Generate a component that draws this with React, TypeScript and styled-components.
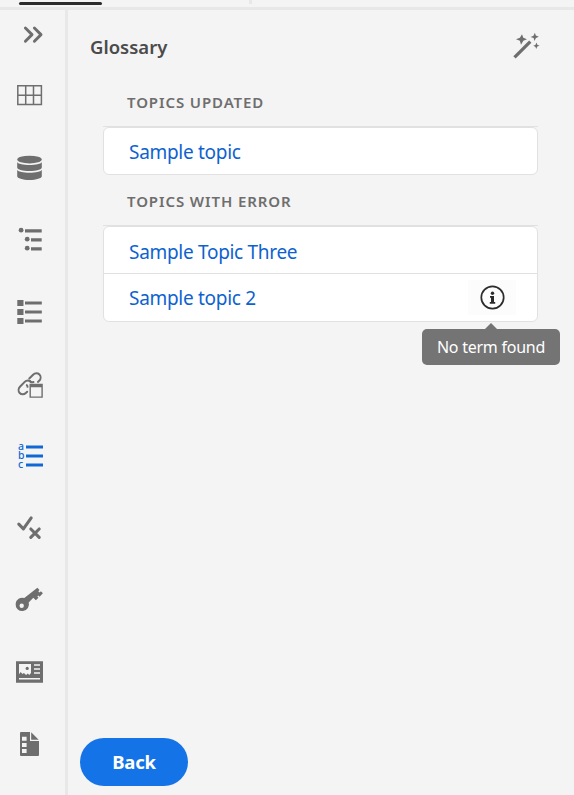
import React from "react";
import styled, { createGlobalStyle } from "styled-components";

const GlobalStyle = createGlobalStyle`
  * { box-sizing: border-box; }
  body { margin: 0; background: #f4f4f4; font-family: "Noto Sans", "Open Sans", sans-serif; }
`;

const Shell = styled.div`
  display: flex;
  flex-direction: column;
  width: 574px;
  height: 795px;
  overflow: hidden;
  background: #f4f4f4;
`;

const TabStrip = styled.header`
  display: flex;
  align-items: flex-start;
  flex: none;
  height: 10px;
  padding-left: 19px;
  border-bottom: 3px solid #e8e8e8;
`;

const ActiveTab = styled.div`
  width: 83px;
  height: 3px;
  margin-top: 2px;
  border-radius: 2px;
  background: #2c2c2c;
`;

const TabDivider = styled.div`
  width: 3px;
  height: 4px;
  margin-left: 147px;
  background: #e8e8e8;
`;

const Body = styled.div`
  display: flex;
  flex: 1;
  min-height: 0;
`;

const Rail = styled.nav`
  display: flex;
  flex-direction: column;
  flex: none;
  width: 68px;
  border-right: 3px solid #e8e8e8;
`;

const RailButton = styled.button<{ $height?: number; $active?: boolean }>`
  display: flex;
  align-items: center;
  flex: none;
  height: ${(p) => p.$height ?? 72}px;
  padding: 0 0 0 13px;
  border: 0;
  background: none;
  color: ${(p) => (p.$active ? "#1068d4" : "#6e6e6e")};
`;

const Icon = styled.svg.attrs({ viewBox: "0 0 32 32" })`
  display: block;
  flex: none;
  width: 32px;
  height: 32px;
  fill: currentColor;
`;

const Letter = styled.text`
  font: 500 10.5px "Noto Sans", sans-serif;
`;

const Panel = styled.main`
  display: flex;
  flex-direction: column;
  flex: 1;
  min-width: 0;
`;

const PanelHeader = styled.div`
  display: flex;
  align-items: center;
  justify-content: space-between;
  height: 72px;
  padding: 0 32px 0 22px;
  color: #6e6e6e;
`;

const Title = styled.h1`
  margin: 2px 0 0;
  font-size: 18.5px;
  line-height: 24px;
  font-weight: 600;
  color: #4b4b4b;
`;

const Section = styled.section`
  display: flex;
  flex-direction: column;
  width: 435px;
  margin-left: 35px;
`;

const SectionTitle = styled.h2<{ $height: number }>`
  height: ${(p) => p.$height}px;
  margin: 0;
  padding: ${(p) => p.$height - 36}px 0 0 24px;
  border-bottom: 1px solid #e1e1e1;
  font-size: 15px;
  line-height: 22px;
  font-weight: 600;
  letter-spacing: 0.9px;
  color: #6e6e6e;
`;

const Card = styled.div`
  border: 1px solid #e1e1e1;
  border-radius: 6px;
  background: #fff;
`;

const TopicRow = styled.div<{ $height: number; $drop?: number }>`
  display: flex;
  align-items: center;
  justify-content: space-between;
  height: ${(p) => p.$height}px;
  padding: ${(p) => p.$drop ?? 0}px 21px 0 25px;
  & + & { border-top: 1px solid #e1e1e1; }
`;

const TopicLink = styled.a`
  font-size: 19px;
  line-height: 26px;
  letter-spacing: -0.3px;
  color: #0d62d0;
`;

const InfoButton = styled.div`
  position: relative;
  display: flex;
  align-items: center;
  justify-content: center;
  width: 48px;
  height: 35px;
  background: #fcfcfc;
  color: #2c2c2c;
`;

const Tooltip = styled.div`
  position: absolute;
  top: 49px;
  left: -46px;
  width: 138px;
  height: 36px;
  border-radius: 5px;
  background: #747474;
  color: #fff;
  font-size: 16px;
  letter-spacing: -0.25px;
  line-height: 36px;
  text-align: center;
  white-space: nowrap;
  &::before {
    content: "";
    position: absolute;
    top: -6px;
    left: 63px;
    border: 6px solid transparent;
    border-top: 0;
    border-bottom-color: #747474;
  }
`;

const Footer = styled.footer`
  display: flex;
  margin-top: auto;
  padding: 0 0 9px 12px;
`;

const BackButton = styled.button`
  width: 108px;
  height: 48px;
  padding: 0 0 2px;
  border: 0;
  border-radius: 24px;
  background: #1473e6;
  color: #fff;
  font: 700 18.5px "Noto Sans", sans-serif;
  letter-spacing: -0.2px;
`;

const ExpandIcon = () => (
  <Icon>
    <path d="M12.4 9l6.6 6.6-6.6 6.6M21.4 9l6.6 6.6-6.6 6.6" fill="none" stroke="currentColor" strokeWidth="2.9" strokeLinecap="round" strokeLinejoin="round" />
  </Icon>
);

const GridIcon = () => (
  <Icon>
    <path d="M4.8 5.8h23.6v18.6H4.8zM12.7 5.8v18.6M20.5 5.8v18.6M4.8 15.2h23.6" fill="none" stroke="currentColor" strokeWidth="1.5" />
  </Icon>
);

const DatabaseIcon = () => (
  <Icon>
    <ellipse cx="16.5" cy="7.6" rx="12.3" ry="3.9" />
    <path d="M4.2 10.2c1.2 1.7 6 2.7 12.3 2.7s11.1-1 12.3-2.7v5.3c0 2-5.5 3.6-12.3 3.6S4.2 17.5 4.2 15.500z" />
    <path d="M4.2 18c1.2 1.7 6 2.7 12.3 2.7s11.1-1 12.3-2.7v6.300c0 2-5.5 3.7-12.3 3.7S4.2 26.300 4.2 24.300z" />
  </Icon>
);

const OutlineIcon = () => (
  <Icon>
    <circle cx="8.1" cy="6.2" r="2.4" />
    <circle cx="14.2" cy="15.2" r="2.4" />
    <circle cx="14.2" cy="24.2" r="2.4" />
    <path d="M12 5.3h16.7v3.2H12zM18 14.3h10.7v3.2H18zM18 23.3h10.7v3.2H18z" />
  </Icon>
);

const ListIcon = () => (
  <Icon>
    <path d="M4.3 4h6.2v6H4.3zM4.3 13h6.2v6H4.3zM4.3 22h6.2v6H4.3zM12 5.4h16.8v3.2H12zM12 14.4h16.8v3.2H12zM12 23.4h16.8v3.2H12z" />
  </Icon>
);

const LinkIcon = () => (
  <Icon>
    <g fill="none" stroke="currentColor" strokeWidth="2" strokeLinecap="round">
      <path d="M16.3 10.500l3.8-3.800c1.800-1.800 4.700-1.800 6.300-.2 1.600 1.600 1.600 4.300 0 6l-1.500 1.400M20.500 14.100c-1.500.3-2.800 0-3.900-1" />
      <path d="M18.300 14.300c-1.700-2.200-4.700-2.300-6.600-.4L7.200 18.500c-2 2-2.100 4.800-.5 6.500s4.400 1.700 6.100 0l1.400-1.300M14.500 18.800c.1-.6-.2-1.200-.7-1.700" />
    </g>
    <path d="M16.500 15.800h13.300V29.800H16.500zM17.900 19.300v9.200h10.500v-9.200z" fillRule="evenodd" />
  </Icon>
);

const GlossaryIcon = () => (
  <Icon>
    <Letter x="5" y="10">a</Letter>
    <Letter x="5" y="19">b</Letter>
    <Letter x="5" y="28">c</Letter>
    <path d="M13 5.5h17v3H13zM13 14.5h17v3H13zM13 23.5h17v3H13z" />
  </Icon>
);

const ReviewIcon = () => (
  <Icon>
    <path d="M5.8 12.2l4.6 4.6 7.8-10.900M17.800 17l8.400 8.400M26.200 17l-8.400 8.400" fill="none" stroke="currentColor" strokeWidth="3.100" strokeLinecap="round" strokeLinejoin="round" />
  </Icon>
);

const KeyIcon = () => (
  <Icon>
    <path d="M24.400 3.800l2.100 2.100-1.200 1.300 1.300 1.300 1.300-1.200 2 2-3.300 3.400-1.300-1.300-1 1 1.200 1.300-2.700 2.600-2.500-2.500-4.600 4.600a6.700 6.700 0 1 1-4.400-4.400zM8.700 19.500a2.200 2.200 0 1 0 0 4.400 2.200 2.200 0 0 0 0-4.400z" fillRule="evenodd" />
  </Icon>
);

const NewsIcon = () => (
  <Icon>
    <path d="M3 5.300h27v21.400H3zM6 8v10.300l1.700-2.200 1.700 2 1.500-1.100 2.200 2 1.700-1.600 1.500 1.500 1.700-1.900V8zM21 8.300v1.500h6V8.300zM21 12.200v1.500h6v-1.500zM21 16.200v1.500h6v-1.500zM6 22.100v1.500h21v-1.500z" fillRule="evenodd" />
    <circle cx="14.200" cy="12.400" r="1.600" />
  </Icon>
);

const DocumentIcon = () => (
  <Icon>
    <path d="M8 4h9v9h9v14q0 1-1 1H8q-1 0-1-1V5q0-1 1-1zM9 8.800v4h4.600v-4zM9 14.900v4h4.600v-4zM9 21v4h4.600v-4z" fillRule="evenodd" />
    <path d="M18.200 4.200v7.500h7.500z" />
  </Icon>
);

const WandIcon = () => (
  <Icon>
    <path d="M4.500 27.300L20.300 11.600" fill="none" stroke="currentColor" strokeWidth="3.300" />
    <path d="M12 4.300l1.300 3.500 3.700 1.500-3.700 1.400L11 14.700l-1.100-4L6 9.300l3.900-1.500zM24.900 2.800l.9 2.800 3 1.100-2.900 1.200-1.400 3-.9-2.900-3-1.100 2.900-1.200zM26.500 12.500l.8 2.300 2.200.9-2.200.9-1.100 2.500-.8-2.400-2.200-.9 2.200-.9z" />
  </Icon>
);

const InfoIcon = () => (
  <Icon>
    <circle cx="16.5" cy="15.5" r="11.2" fill="none" stroke="currentColor" strokeWidth="1.700" />
    <circle cx="16.5" cy="11.2" r="1.7" />
    <path d="M14 14h4v6h1.200v1.700h-5.400V20H15v-4.300h-1z" />
  </Icon>
);

const railItems = [GridIcon, DatabaseIcon, OutlineIcon, ListIcon, LinkIcon, GlossaryIcon, ReviewIcon, KeyIcon, NewsIcon, DocumentIcon];

export default function App() {
  return (
    <>
      <GlobalStyle />
      <Shell>
        <TabStrip>
          <ActiveTab />
          <TabDivider />
        </TabStrip>
        <Body>
          <Rail>
            <RailButton $height={50}>
              <ExpandIcon />
            </RailButton>
            {railItems.map((Item, i) => (
              <RailButton key={i} $active={Item === GlossaryIcon}>
                <Item />
              </RailButton>
            ))}
          </Rail>
          <Panel>
            <PanelHeader>
              <Title>Glossary</Title>
              <WandIcon />
            </PanelHeader>
            <Section>
              <SectionTitle $height={45}>TOPICS UPDATED</SectionTitle>
              <Card>
                <TopicRow $height={46} $drop={2}>
                  <TopicLink>Sample topic</TopicLink>
                </TopicRow>
              </Card>
              <SectionTitle $height={51}>TOPICS WITH ERROR</SectionTitle>
              <Card>
                <TopicRow $height={46} $drop={4}>
                  <TopicLink>Sample Topic Three</TopicLink>
                </TopicRow>
                <TopicRow $height={48}>
                  <TopicLink>Sample topic 2</TopicLink>
                  <InfoButton>
                    <InfoIcon />
                    <Tooltip>No term found</Tooltip>
                  </InfoButton>
                </TopicRow>
              </Card>
            </Section>
            <Footer>
              <BackButton>Back</BackButton>
            </Footer>
          </Panel>
        </Body>
      </Shell>
    </>
  );
}
